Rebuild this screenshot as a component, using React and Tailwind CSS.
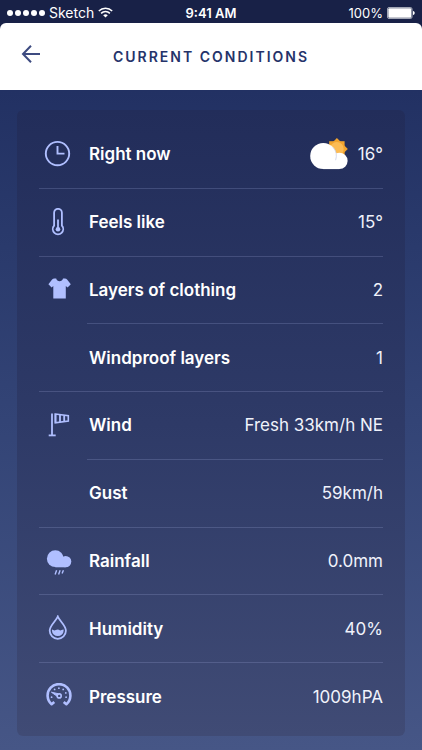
import clsx from 'clsx'

function ClockIcon() {
  return (
    <svg width="28" height="28" viewBox="0 0 28 28" fill="none" stroke="currentColor" strokeWidth="1.9" aria-hidden="true">
      <circle cx="13.5" cy="13.6" r="11.7" />
      <path d="M13.5 6v7.6h7" />
    </svg>
  )
}

function ThermometerIcon() {
  return (
    <svg width="28" height="28" viewBox="0 0 28 28" fill="none" stroke="currentColor" strokeWidth="1.8" aria-hidden="true">
      <path d="M10.1 17.6V4.7a3.9 3.9 0 0 1 7.8 0v12.9a5.2 5.2 0 1 1-7.8 0z" />
      <path d="M14 11.5v9" />
      <circle cx="14" cy="21.2" r="2.3" fill="currentColor" stroke="none" />
    </svg>
  )
}

function ShirtIcon() {
  return (
    <svg width="28" height="28" viewBox="0 0 28 28" fill="currentColor" aria-hidden="true">
      <path d="M12.2 2.6c.5 1.8 1.7 2.7 3.4 2.7s2.9-.9 3.4-2.7h1.8c1 0 1.8.4 2.5 1.2l3.5 4.5-3.2 3.3-1.8-1.7v12.7H9.3V9.9l-1.7 1.7-3.2-3.3 3.5-4.5c.7-.8 1.5-1.2 2.5-1.2z" />
    </svg>
  )
}

function WindsockIcon() {
  return (
    <svg width="28" height="28" viewBox="0 0 28 28" fill="none" stroke="currentColor" aria-hidden="true">
      <path d="M8 2.4v22.2" strokeWidth="1.8" />
      <path d="M4.7 24.4h7" strokeWidth="1.8" />
      <path d="M11.3 3l13 1.8v5.2l-13 1.8z" strokeWidth="1.6" />
      <path d="M11.6 3v8.8M16 3.8v7.3M20.2 4.4v6" strokeWidth="1.8" />
    </svg>
  )
}

function RainIcon() {
  return (
    <svg width="28" height="28" viewBox="0 0 28 28" fill="currentColor" aria-hidden="true">
      <circle cx="11.3" cy="11.7" r="8.4" />
      <circle cx="21.6" cy="14.6" r="5.7" />
      <path d="M11.3 12h10.3v8.300H11.300z" />
      <path d="M12.6 23.3l-1.5 4.1M16.100 23.300l-1.500 4.100M19.400 23.300l-1.300 3.200" fill="none" stroke="currentColor" strokeWidth="1.4" />
    </svg>
  )
}

function DropletIcon() {
  return (
    <svg width="28" height="28" viewBox="0 0 28 28" fill="none" aria-hidden="true">
      <path
        d="M13.8 1.5C12 6.2 5.7 10.3 5.7 15.8a8.1 8 0 0 0 16.2 0c0-5.500-6.300-9.600-8.100-14.300z"
        stroke="currentColor"
        strokeWidth="1.8"
      />
      <path d="M8 14.6c1 0 1.500.8 2.500.8s1.500-.8 3.300-.8 1.500.8 2.500.8 1.500-.8 3.300-.8v1.100a5.800 5.300 0 0 1-11.600 0z" fill="currentColor" />
    </svg>
  )
}

function GaugeIcon() {
  return (
    <svg width="28" height="28" viewBox="0 0 28 28" fill="none" stroke="currentColor" aria-hidden="true">
      <path d="M10.3 18.9l-2.700 2.300a11.400 11.400 0 1 1 14.800 0l-2.700-2.300" strokeWidth="2.6" strokeLinejoin="round" />
      <circle cx="15.2" cy="12.9" r="2" strokeWidth="1.6" />
      <path d="M13.2 13.3L7.400 9.200l6.800 1.500z" fill="currentColor" strokeWidth="1" />
      <g fill="currentColor" stroke="none">
        <circle cx="7.6" cy="14.2" r=".9" />
        <circle cx="10.6" cy="6.4" r=".9" />
        <circle cx="14.9" cy="5.2" r=".9" />
        <circle cx="19.2" cy="6.4" r=".9" />
        <circle cx="21.8" cy="9.9" r=".9" />
        <circle cx="22.1" cy="14.2" r=".9" />
      </g>
    </svg>
  )
}

// Cloud with the sun peeking out behind it.
function PartlyCloudyIcon() {
  return (
    <svg width="38" height="32" viewBox="0 0 38 32" role="img" aria-label="Partly cloudy">
      <rect x="19.2" y="3.2" width="15.4" height="15.4" fill="#f2a52f" />
      <rect x="19.2" y="3.2" width="15.4" height="15.4" fill="#f2a52f" transform="rotate(45 26.9 10.9)" />
      <circle cx="26.9" cy="10.9" r="6.8" fill="#fcbc55" />
      <circle cx="29.4" cy="22.9" r="8.2" fill="#fff" />
      <path d="M13.2 18h16.200v13.100H13.200z" fill="#fff" />
      <circle cx="13.3" cy="18" r="13.1" fill="#fff" />
      <path d="M22.9 9.2a13.100 13.100 0 0 1 2.700 13" fill="none" stroke="#c9d0ea" strokeWidth=".8" />
    </svg>
  )
}

function WifiIcon() {
  return (
    <svg width="15" height="11" viewBox="0 0 15 11" fill="none" stroke="currentColor" strokeWidth="1.5" aria-hidden="true">
      <path d="M.8 4a9.600 9.600 0 0 1 13.400 0" />
      <path d="M3.1 6.4a6.300 6.300 0 0 1 8.800 0" />
      <path d="M7.5 10.6L5.200 8.300a3.300 3.300 0 0 1 4.600 0z" fill="currentColor" stroke="none" />
    </svg>
  )
}

function BatteryIcon() {
  return (
    <svg width="28" height="12" viewBox="0 0 28 12" fill="currentColor" aria-hidden="true">
      <rect x=".5" y=".5" width="24.5" height="11" rx="1.5" fill="none" stroke="currentColor" strokeOpacity=".6" />
      <rect x="1.3" y="1.3" width="23" height="9.4" rx="1" />
      <path d="M26 4c1.200.3 1.700 1 1.700 2s-.5 1.700-1.700 2z" />
    </svg>
  )
}

// `sub` rows belong to the row above: no icon, and a rule that starts at the label.
const CONDITIONS = [
  { label: 'Right now', value: '16°', icon: ClockIcon, weather: PartlyCloudyIcon },
  { label: 'Feels like', value: '15°', icon: ThermometerIcon },
  { label: 'Layers of clothing', value: '2', icon: ShirtIcon },
  { label: 'Windproof layers', value: '1', sub: true },
  { label: 'Wind', value: 'Fresh 33km/h NE', icon: WindsockIcon },
  { label: 'Gust', value: '59km/h', sub: true },
  { label: 'Rainfall', value: '0.0mm', icon: RainIcon },
  { label: 'Humidity', value: '40%', icon: DropletIcon },
  { label: 'Pressure', value: '1009hPA', icon: GaugeIcon },
]

function StatusBar() {
  return (
    <div className="grid h-[23px] grid-cols-[1fr_auto_1fr] items-center px-[7px] pt-0.5 text-[13px] leading-4 text-white">
      <div className="flex items-center gap-1">
        <div className="flex gap-0.5">
          {[1, 2, 3, 4, 5].map((n) => (
            <span key={n} className="size-1.5 rounded-full bg-white" />
          ))}
        </div>
        <span className="text-[14px]">Sketch</span>
        <WifiIcon />
      </div>
      <span className="font-semibold">9:41 AM</span>
      <div className="flex items-center justify-end gap-1">
        <span>100%</span>
        <BatteryIcon />
      </div>
    </div>
  )
}

function Header() {
  return (
    <header className="grid h-[67px] grid-cols-[1fr_auto_1fr] items-center rounded-t-md bg-white px-5 text-[#25336a]">
      <button type="button" aria-label="Back" className="-mt-1.5 w-fit cursor-pointer text-[#3d4b80]">
        <svg width="22" height="20" viewBox="0 0 22 20" fill="none" stroke="currentColor" strokeWidth="2" aria-hidden="true">
          <path d="M11 1.8L3 10l8 8.200M3 10h17" />
        </svg>
      </button>
      <h1 className="text-[14px] leading-5 font-semibold tracking-[2px] uppercase">Current conditions</h1>
    </header>
  )
}

function ConditionRow({ label, value, icon: Icon, weather: Weather, sub }) {
  return (
    <li
      className={clsx(
        'flex min-h-14 items-center border-t border-[#b4c0f0]/20 first:border-transparent',
        sub && 'ml-12'
      )}
    >
      {Icon && (
        <span className="flex w-12 shrink-0 justify-center pr-2.5 text-[#b0bfff]">
          <Icon />
        </span>
      )}
      <span className="flex-1 pl-0.5 font-semibold">{label}</span>
      <span className="flex items-center gap-2.5 text-[#f0f2fb]">
        {Weather && <Weather />}
        {value}
      </span>
    </li>
  )
}

export default function App() {
  return (
    <div className="flex min-h-screen flex-col bg-[#182147] font-[Inter,'Liberation_Sans',sans-serif]">
      <StatusBar />
      <Header />
      <main className="flex flex-1 flex-col bg-linear-to-b from-[#223163] via-[#334476] to-[#465686] px-[17px] pt-5 pb-3.5">
        <ul className="grid flex-1 auto-rows-fr rounded-md bg-linear-to-b from-[#222d5a] via-[#2e3a67] to-[#404b75] px-[22px] pt-2.5 pb-1.5 text-[17px] leading-6 text-white">
          {CONDITIONS.map((c) => (
            <ConditionRow key={c.label} {...c} />
          ))}
        </ul>
      </main>
    </div>
  )
}
